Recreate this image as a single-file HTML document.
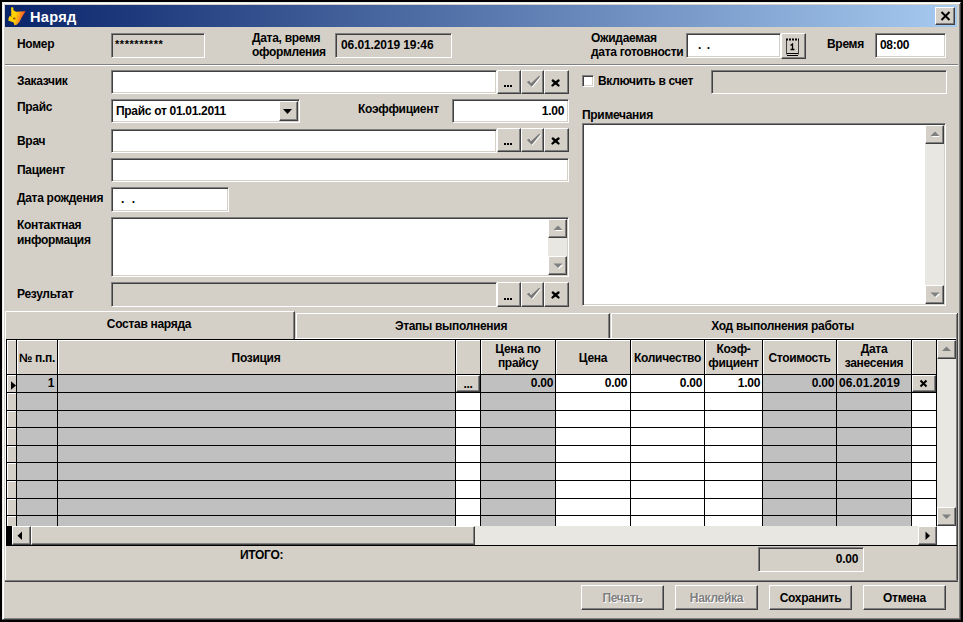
<!DOCTYPE html>
<html><head><meta charset="utf-8">
<style>
*{box-sizing:border-box;margin:0;padding:0}
html,body{width:963px;height:622px;overflow:hidden;background:#000}
body{position:relative;font:bold 12px "Liberation Sans",sans-serif;color:#000;letter-spacing:-0.3px}
.a{position:absolute}
.t{position:absolute;white-space:nowrap;line-height:14px}
.win{position:absolute;left:2px;top:2px;width:959px;height:618px;background:#d4d0c8;
 border-top:1px solid #ecebe6;border-left:1px solid #ecebe6;border-right:1px solid #404040;border-bottom:1px solid #404040;
 box-shadow:inset 1px 1px 0 #fff,inset -1px -1px 0 #808080}
.title{position:absolute;left:5px;top:5px;width:952px;height:22px;background:linear-gradient(to right,#0a246a,#a6caf0)}
/* sunken field: 2px edges */
.sk{position:absolute;background:#fff;border-top:1px solid #808080;border-left:1px solid #808080;border-right:1px solid #fff;border-bottom:1px solid #fff;box-shadow:inset 1px 1px 0 #404040,inset -1px -1px 0 #d4d0c8}
.st{position:absolute;background:#d4d0c8;border-top:1px solid #808080;border-left:1px solid #808080;border-right:1px solid #fff;border-bottom:1px solid #fff;box-shadow:inset 1px 1px 0 #404040,inset -1px -1px 0 #d4d0c8}
.btn{position:absolute;background:#d4d0c8;border-top:1px solid #fff;border-left:1px solid #fff;border-right:1px solid #404040;border-bottom:1px solid #404040;box-shadow:inset -1px -1px 0 #808080}
.gry{background:#d4d0c8}
.dis{color:#808080;text-shadow:1px 1px 0 #fff}
.hl{position:absolute;height:1px}
.vl{position:absolute;width:1px}
</style></head><body>
<div class="win"></div>
<div class="title"></div>
<!-- title icon -->
<svg class="a" style="left:7px;top:6px" width="20" height="20" viewBox="0 0 20 20">
 <defs><linearGradient id="fx" x1="0" y1="0" x2="1" y2="0.25"><stop offset="0" stop-color="#ffd000"/><stop offset="0.5" stop-color="#ffd200"/><stop offset="0.72" stop-color="#ff9a20"/><stop offset="1" stop-color="#ff4a20"/></linearGradient></defs>
 <path d="M5.1 0.9 L6.3 1.8 L6.5 4.2 L9 5.7 L18.6 5.3 L15.1 10.7 L12.4 16.1 L9.7 18.8 L7.4 19.2 L6.7 16.5 L1.2 14.6 L2 10.7 L4.3 9.6 L4.1 1.8 Z" fill="url(#fx)"/>
 <ellipse cx="7.3" cy="12.5" rx="1.2" ry="0.9" fill="#8a4a10"/>
 <circle cx="4.2" cy="10.5" r="0.5" fill="#a06010"/>
</svg>
<div class="t" style="left:30px;top:9px;color:#fff;font-size:14.6px;line-height:16px;letter-spacing:0.3px">Наряд</div>
<!-- close btn -->
<div class="btn" style="left:935px;top:7px;width:20px;height:18px"></div>
<svg class="a" style="left:940px;top:11px" width="11" height="10" viewBox="0 0 11 10"><path d="M1.5 1 L9.5 9 M9.5 1 L1.5 9" stroke="#000" stroke-width="2"/></svg>

<!-- header row -->
<div class="t" style="left:17px;top:37px">Номер</div>
<div class="st" style="left:111px;top:33px;width:94px;height:25px"></div>
<div class="t" style="left:115px;top:37px;font-size:11px;letter-spacing:0.55px">**********</div>
<div class="t" style="left:252px;top:31px">Дата, время<br>оформления</div>
<div class="st" style="left:335px;top:33px;width:117px;height:25px"></div>
<div class="t" style="left:341px;top:38px;letter-spacing:-0.1px">06.01.2019 19:46</div>
<div class="t" style="left:591px;top:31px">Ожидаемая<br>дата готовности</div>
<div class="sk" style="left:686px;top:33px;width:95px;height:25px"></div>
<div class="t" style="left:698px;top:38px;letter-spacing:1px">. .</div>
<div class="btn" style="left:781px;top:33px;width:25px;height:26px"></div>
<svg class="a" style="left:785px;top:37px" width="16" height="20" viewBox="0 0 16 20">
 <path d="M1.5 2.5V17.5M13.5 2.5V17.5" stroke="#404040" stroke-width="1"/>
 <path d="M1 2.5H14" stroke="#000" stroke-width="2" stroke-dasharray="2 1"/>
 <path d="M2 16.5H13M2 18.5H13" stroke="#000" stroke-width="1"/>
 <path d="M5.5 8.5L7.5 7V12.5M5.5 12.5H9.5" stroke="#000" stroke-width="1.3" fill="none"/>
</svg>
<div class="t" style="left:827px;top:37px">Время</div>
<div class="sk" style="left:875px;top:33px;width:71px;height:25px"></div>
<div class="t" style="left:880px;top:38px;font-size:12px">08:00</div>
<!-- separator -->
<div class="hl" style="left:5px;top:64px;width:953px;background:#808080"></div>
<div class="hl" style="left:5px;top:65px;width:953px;background:#fff"></div>

<!-- left form -->
<div class="t" style="left:17px;top:74px">Заказчик</div>
<div class="sk" style="left:111px;top:70px;width:386px;height:24px"></div>
<div class="btn" style="left:497px;top:70px;width:24px;height:24px"></div>
<div class="btn" style="left:521px;top:70px;width:23px;height:24px"></div>
<div class="btn" style="left:544px;top:70px;width:25px;height:24px"></div>
<svg class="a" style="left:504px;top:85px" width="10" height="3"><rect x="0" y="0" width="2" height="2"/><rect x="3" y="0" width="2" height="2"/><rect x="6" y="0" width="2" height="2"/></svg>
<svg class="a" style="left:526px;top:75px" width="16" height="13"><path d="M0.8 6.9 L3.3 5.7 L5 8.3 L13.2 0.8 L14.2 1.6 L5.8 11.8 Z" fill="#fff" transform="translate(0.8,0.6)"/><path d="M0.8 6.9 L3.3 5.7 L5 8.3 L13.2 0.8 L14.2 1.6 L5.8 11.8 Z" fill="#787878"/></svg>
<svg class="a" style="left:551px;top:79px" width="10" height="8"><path d="M1.8 1.5 Q4.5 3.8 7.5 6.5 M7.5 1.5 Q4.5 3.8 1.5 6.5" stroke="#000" stroke-width="2.3" stroke-linecap="round"/></svg>


<div class="t" style="left:17px;top:100px">Прайс</div>
<div class="sk" style="left:111px;top:99px;width:189px;height:24px"></div>
<div class="t" style="left:116px;top:104px">Прайс от 01.01.2011</div>
<div class="btn" style="left:279px;top:101px;width:19px;height:20px"></div>
<svg class="a" style="left:283px;top:109px" width="10" height="6"><path d="M0 0H9L4.5 5Z" fill="#000"/></svg>
<div class="t" style="left:358px;top:102px">Коэффициент</div>
<div class="sk" style="left:452px;top:99px;width:117px;height:24px"></div>
<div class="t" style="left:452px;top:104px;width:112px;text-align:right">1.00</div>

<div class="t" style="left:17px;top:134px">Врач</div>
<div class="sk" style="left:111px;top:129px;width:386px;height:24px"></div>
<div class="btn" style="left:497px;top:128px;width:24px;height:24px"></div>
<div class="btn" style="left:521px;top:128px;width:23px;height:24px"></div>
<div class="btn" style="left:544px;top:128px;width:25px;height:24px"></div>
<svg class="a" style="left:504px;top:143px" width="10" height="3"><rect x="0" y="0" width="2" height="2"/><rect x="3" y="0" width="2" height="2"/><rect x="6" y="0" width="2" height="2"/></svg>
<svg class="a" style="left:526px;top:133px" width="16" height="13"><path d="M0.8 6.9 L3.3 5.7 L5 8.3 L13.2 0.8 L14.2 1.6 L5.8 11.8 Z" fill="#fff" transform="translate(0.8,0.6)"/><path d="M0.8 6.9 L3.3 5.7 L5 8.3 L13.2 0.8 L14.2 1.6 L5.8 11.8 Z" fill="#787878"/></svg>
<svg class="a" style="left:551px;top:137px" width="10" height="8"><path d="M1.8 1.5 Q4.5 3.8 7.5 6.5 M7.5 1.5 Q4.5 3.8 1.5 6.5" stroke="#000" stroke-width="2.3" stroke-linecap="round"/></svg>


<div class="t" style="left:17px;top:163px">Пациент</div>
<div class="sk" style="left:111px;top:158px;width:458px;height:24px"></div>

<div class="t" style="left:17px;top:191px">Дата рождения</div>
<div class="sk" style="left:111px;top:187px;width:118px;height:25px"></div>
<div class="t" style="left:121px;top:192px;letter-spacing:2px">. .</div>

<div class="t" style="left:17px;top:218px;line-height:15px">Контактная<br>информация</div>
<div class="sk" style="left:111px;top:217px;width:458px;height:60px"></div>
<div class="a" style="left:548px;top:219px;width:19px;height:56px;background:#e9e7e2"></div>
<div class="btn" style="left:548px;top:219px;width:19px;height:19px"></div>
<svg class="a" style="left:553px;top:225px" width="11" height="7"><path d="M1 5H9L5 1Z" fill="#fff" transform="translate(1,1)"/><path d="M0.5 5H9.5L5 0.5Z" fill="#808080"/></svg>
<div class="btn" style="left:548px;top:256px;width:19px;height:19px"></div>
<svg class="a" style="left:553px;top:263px" width="11" height="7"><path d="M1 1H9L5 5Z" fill="#fff" transform="translate(1,1)"/><path d="M0.5 0.5H9.5L5 5Z" fill="#808080"/></svg>


<div class="t" style="left:17px;top:287px">Результат</div>
<div class="sk" style="left:111px;top:282px;width:386px;height:25px;background:#d4d0c8"></div>
<div class="btn" style="left:497px;top:282px;width:24px;height:25px"></div>
<div class="btn" style="left:521px;top:282px;width:23px;height:25px"></div>
<div class="btn" style="left:544px;top:282px;width:25px;height:25px"></div>
<svg class="a" style="left:504px;top:298px" width="10" height="3"><rect x="0" y="0" width="2" height="2"/><rect x="3" y="0" width="2" height="2"/><rect x="6" y="0" width="2" height="2"/></svg>
<svg class="a" style="left:526px;top:287px" width="16" height="13"><path d="M0.8 6.9 L3.3 5.7 L5 8.3 L13.2 0.8 L14.2 1.6 L5.8 11.8 Z" fill="#fff" transform="translate(0.8,0.6)"/><path d="M0.8 6.9 L3.3 5.7 L5 8.3 L13.2 0.8 L14.2 1.6 L5.8 11.8 Z" fill="#787878"/></svg>
<svg class="a" style="left:551px;top:291px" width="10" height="8"><path d="M1.8 1.5 Q4.5 3.8 7.5 6.5 M7.5 1.5 Q4.5 3.8 1.5 6.5" stroke="#000" stroke-width="2.3" stroke-linecap="round"/></svg>


<!-- right form -->
<div class="sk" style="left:582px;top:75px;width:12px;height:12px"></div>
<div class="t" style="left:598px;top:74px">Включить в счет</div>
<div class="st" style="left:711px;top:70px;width:236px;height:24px"></div>
<div class="t" style="left:582px;top:108px">Примечания</div>
<div class="sk" style="left:582px;top:123px;width:364px;height:183px"></div>
<div class="a" style="left:925px;top:125px;width:19px;height:179px;background:#e9e7e2"></div>
<div class="btn" style="left:925px;top:125px;width:19px;height:19px"></div>
<svg class="a" style="left:930px;top:131px" width="11" height="7"><path d="M1 5H9L5 1Z" fill="#fff" transform="translate(1,1)"/><path d="M0.5 5H9.5L5 0.5Z" fill="#808080"/></svg>
<div class="btn" style="left:925px;top:285px;width:19px;height:19px"></div>
<svg class="a" style="left:930px;top:292px" width="11" height="7"><path d="M1 1H9L5 5Z" fill="#fff" transform="translate(1,1)"/><path d="M0.5 0.5H9.5L5 5Z" fill="#808080"/></svg>


<!-- tabs -->
<div class="a" style="left:5px;top:311px;width:290px;height:28px;background:#d4d0c8;border-top:1px solid #fff;border-left:1px solid #fff;border-right:1px solid #404040;box-shadow:inset -1px 0 0 #808080;border-top-left-radius:2px"></div>
<div class="t" style="left:5px;top:317px;width:288px;text-align:center">Состав наряда</div>
<div class="a" style="left:296px;top:313px;width:314px;height:25px;background:#d4d0c8;border-top:1px solid #fff;border-left:1px solid #fff;border-right:1px solid #404040;box-shadow:inset -1px 0 0 #808080"></div>
<div class="t" style="left:294px;top:319px;width:314px;text-align:center">Этапы выполнения</div>
<div class="a" style="left:611px;top:313px;width:347px;height:25px;background:#d4d0c8;border-top:1px solid #fff;border-left:1px solid #fff;border-right:1px solid #404040;box-shadow:inset -1px 0 0 #808080"></div>
<div class="t" style="left:609px;top:319px;width:347px;text-align:center">Ход выполнения работы</div>
<div class="hl" style="left:295px;top:338px;width:662px;background:#fff"></div>
<div class="vl" style="left:5px;top:311px;height:270px;background:#fff"></div>
<div class="vl" style="left:956px;top:338px;height:242px;background:#808080"></div><div class="vl" style="left:957px;top:313px;height:269px;background:#404040"></div>

<!-- grid -->
<div class="a" style="left:6px;top:339px;width:931px;height:187px;background:#fff"></div>
<div class="a" style="left:6px;top:339px;width:931px;height:35px;background:#d4d0c8"></div>
<div class="a" style="left:6px;top:374px;width:10px;height:152px;background:#d4d0c8"></div>
<div class="a" style="left:16px;top:374px;width:439px;height:152px;background:#c0c0c0"></div>
<div class="a" style="left:480px;top:374px;width:75px;height:152px;background:#c0c0c0"></div>
<div class="a" style="left:762px;top:374px;width:149px;height:152px;background:#c0c0c0"></div>
<div class="a" style="left:7px;top:340px;width:9px;height:1px;background:#fff"></div>
<div class="a" style="left:7px;top:340px;width:1px;height:34px;background:#fff"></div>
<div class="a" style="left:17px;top:340px;width:40px;height:1px;background:#fff"></div>
<div class="a" style="left:17px;top:340px;width:1px;height:34px;background:#fff"></div>
<div class="a" style="left:58px;top:340px;width:397px;height:1px;background:#fff"></div>
<div class="a" style="left:58px;top:340px;width:1px;height:34px;background:#fff"></div>
<div class="a" style="left:456px;top:340px;width:24px;height:1px;background:#fff"></div>
<div class="a" style="left:456px;top:340px;width:1px;height:34px;background:#fff"></div>
<div class="a" style="left:481px;top:340px;width:74px;height:1px;background:#fff"></div>
<div class="a" style="left:481px;top:340px;width:1px;height:34px;background:#fff"></div>
<div class="a" style="left:556px;top:340px;width:74px;height:1px;background:#fff"></div>
<div class="a" style="left:556px;top:340px;width:1px;height:34px;background:#fff"></div>
<div class="a" style="left:631px;top:340px;width:73px;height:1px;background:#fff"></div>
<div class="a" style="left:631px;top:340px;width:1px;height:34px;background:#fff"></div>
<div class="a" style="left:705px;top:340px;width:57px;height:1px;background:#fff"></div>
<div class="a" style="left:705px;top:340px;width:1px;height:34px;background:#fff"></div>
<div class="a" style="left:763px;top:340px;width:73px;height:1px;background:#fff"></div>
<div class="a" style="left:763px;top:340px;width:1px;height:34px;background:#fff"></div>
<div class="a" style="left:837px;top:340px;width:74px;height:1px;background:#fff"></div>
<div class="a" style="left:837px;top:340px;width:1px;height:34px;background:#fff"></div>
<div class="a" style="left:912px;top:340px;width:24px;height:1px;background:#fff"></div>
<div class="a" style="left:912px;top:340px;width:1px;height:34px;background:#fff"></div>
<div class="a" style="left:7px;top:375px;width:9px;height:1px;background:#fff"></div>
<div class="a" style="left:7px;top:393px;width:9px;height:1px;background:#fff"></div>
<div class="a" style="left:7px;top:411px;width:9px;height:1px;background:#fff"></div>
<div class="a" style="left:7px;top:428px;width:9px;height:1px;background:#fff"></div>
<div class="a" style="left:7px;top:446px;width:9px;height:1px;background:#fff"></div>
<div class="a" style="left:7px;top:463px;width:9px;height:1px;background:#fff"></div>
<div class="a" style="left:7px;top:481px;width:9px;height:1px;background:#fff"></div>
<div class="a" style="left:7px;top:499px;width:9px;height:1px;background:#fff"></div>
<div class="a" style="left:7px;top:516px;width:9px;height:1px;background:#fff"></div>
<div class="a" style="left:7px;top:374px;width:1px;height:152px;background:#fff"></div>
<div class="hl" style="left:6px;top:339px;width:950px;background:#000"></div>
<div class="hl" style="left:6px;top:374px;width:931px;background:#000"></div>
<div class="hl" style="left:6px;top:392px;width:931px;background:#000"></div>
<div class="hl" style="left:6px;top:410px;width:931px;background:#000"></div>
<div class="hl" style="left:6px;top:427px;width:931px;background:#000"></div>
<div class="hl" style="left:6px;top:445px;width:931px;background:#000"></div>
<div class="hl" style="left:6px;top:462px;width:931px;background:#000"></div>
<div class="hl" style="left:6px;top:480px;width:931px;background:#000"></div>
<div class="hl" style="left:6px;top:498px;width:931px;background:#000"></div>
<div class="hl" style="left:6px;top:515px;width:931px;background:#000"></div>
<div class="vl" style="left:6px;top:339px;height:187px;background:#000"></div>
<div class="vl" style="left:16px;top:339px;height:187px;background:#000"></div>
<div class="vl" style="left:57px;top:339px;height:187px;background:#000"></div>
<div class="vl" style="left:455px;top:339px;height:187px;background:#000"></div>
<div class="vl" style="left:480px;top:339px;height:187px;background:#000"></div>
<div class="vl" style="left:555px;top:339px;height:187px;background:#000"></div>
<div class="vl" style="left:630px;top:339px;height:187px;background:#000"></div>
<div class="vl" style="left:704px;top:339px;height:187px;background:#000"></div>
<div class="vl" style="left:762px;top:339px;height:187px;background:#000"></div>
<div class="vl" style="left:836px;top:339px;height:187px;background:#000"></div>
<div class="vl" style="left:911px;top:339px;height:187px;background:#000"></div>
<div class="vl" style="left:936px;top:339px;height:187px;background:#000"></div>
<div class="t" style="left:17px;top:351px;width:40px;text-align:center">№ п.п.</div>
<div class="t" style="left:57px;top:351px;width:398px;text-align:center">Позиция</div>
<div class="t" style="left:481px;top:342px;width:74px;text-align:center">Цена по<br>прайсу</div>
<div class="t" style="left:556px;top:351px;width:74px;text-align:center">Цена</div>
<div class="t" style="left:631px;top:351px;width:73px;text-align:center">Количество</div>
<div class="t" style="left:705px;top:342px;width:57px;text-align:center">Коэф-<br>фициент</div>
<div class="t" style="left:763px;top:351px;width:73px;text-align:center">Стоимость</div>
<div class="t" style="left:837px;top:342px;width:74px;text-align:center">Дата<br>занесения</div>
<!-- row 1 -->
<svg class="a" style="left:10px;top:381px" width="7" height="9"><path d="M1 0.3L6 4.5L1 8.7Z" fill="#000"/></svg>
<div class="t" style="left:16px;top:376px;width:38px;text-align:right">1</div>
<div class="btn" style="left:456px;top:375px;width:24px;height:17px"></div>
<div class="t" style="left:456px;top:377px;width:24px;text-align:center">...</div>
<div class="t" style="left:481px;top:376px;width:72px;text-align:right">0.00</div>
<div class="t" style="left:556px;top:376px;width:71px;text-align:right">0.00</div>
<div class="t" style="left:631px;top:376px;width:71px;text-align:right">0.00</div>
<div class="t" style="left:705px;top:376px;width:55px;text-align:right">1.00</div>
<div class="t" style="left:763px;top:376px;width:71px;text-align:right">0.00</div>
<div class="t" style="left:839px;top:376px;width:72px;letter-spacing:0.1px">06.01.2019</div>
<div class="btn" style="left:912px;top:375px;width:24px;height:17px"></div>
<svg class="a" style="left:919px;top:379px" width="10" height="9"><path d="M1.5 1.5 L7.5 7.5 M7.5 1.5 L1.5 7.5" stroke="#000" stroke-width="2"/></svg>

<!-- vertical scrollbar -->
<div class="a" style="left:937px;top:340px;width:19px;height:186px;background:#e9e7e2"></div>
<div class="btn" style="left:937px;top:340px;width:19px;height:19px"></div>
<svg class="a" style="left:942px;top:346px" width="10" height="6"><path d="M0 5H9L4.5 0.5Z" fill="#808080"/></svg>
<div class="btn" style="left:937px;top:507px;width:19px;height:19px"></div>
<svg class="a" style="left:942px;top:514px" width="10" height="6"><path d="M0 0.5H9L4.5 5Z" fill="#808080"/></svg>
<!-- horizontal scrollbar -->
<div class="a" style="left:6px;top:526px;width:931px;height:20px;background:#e9e7e2"></div>
<div class="a" style="left:6px;top:526px;width:6px;height:19px;background:#000"></div>
<div class="btn" style="left:12px;top:526px;width:19px;height:19px"></div>
<svg class="a" style="left:17px;top:531px" width="6" height="10"><path d="M5 0.5V9L0.5 4.75Z" fill="#000"/></svg>
<div class="btn" style="left:31px;top:526px;width:444px;height:19px"></div>
<div class="btn" style="left:918px;top:526px;width:19px;height:19px"></div>
<svg class="a" style="left:925px;top:531px" width="6" height="10"><path d="M0.5 0.5V9L5 4.75Z" fill="#000"/></svg>
<div class="a" style="left:937px;top:526px;width:19px;height:19px;background:#fff"></div>
<div class="hl" style="left:6px;top:545px;width:951px;background:#000"></div>

<!-- bottom -->
<div class="t" style="left:240px;top:548px">ИТОГО:</div>
<div class="st" style="left:758px;top:547px;width:106px;height:25px"></div>
<div class="t" style="left:758px;top:552px;width:100px;text-align:right">0.00</div>
<div class="hl" style="left:5px;top:580px;width:953px;background:#808080"></div>
<div class="hl" style="left:5px;top:581px;width:953px;background:#404040"></div>
<div class="btn" style="left:581px;top:585px;width:83px;height:25px"></div>
<div class="t dis" style="left:581px;top:591px;width:83px;text-align:center">Печать</div>
<div class="btn" style="left:675px;top:585px;width:83px;height:25px"></div>
<div class="t dis" style="left:675px;top:591px;width:83px;text-align:center">Наклейка</div>
<div class="btn" style="left:769px;top:585px;width:83px;height:25px"></div>
<div class="t" style="left:769px;top:591px;width:83px;text-align:center">Сохранить</div>
<div class="btn" style="left:863px;top:585px;width:83px;height:25px"></div>
<div class="t" style="left:863px;top:591px;width:83px;text-align:center">Отмена</div>
</body></html>
